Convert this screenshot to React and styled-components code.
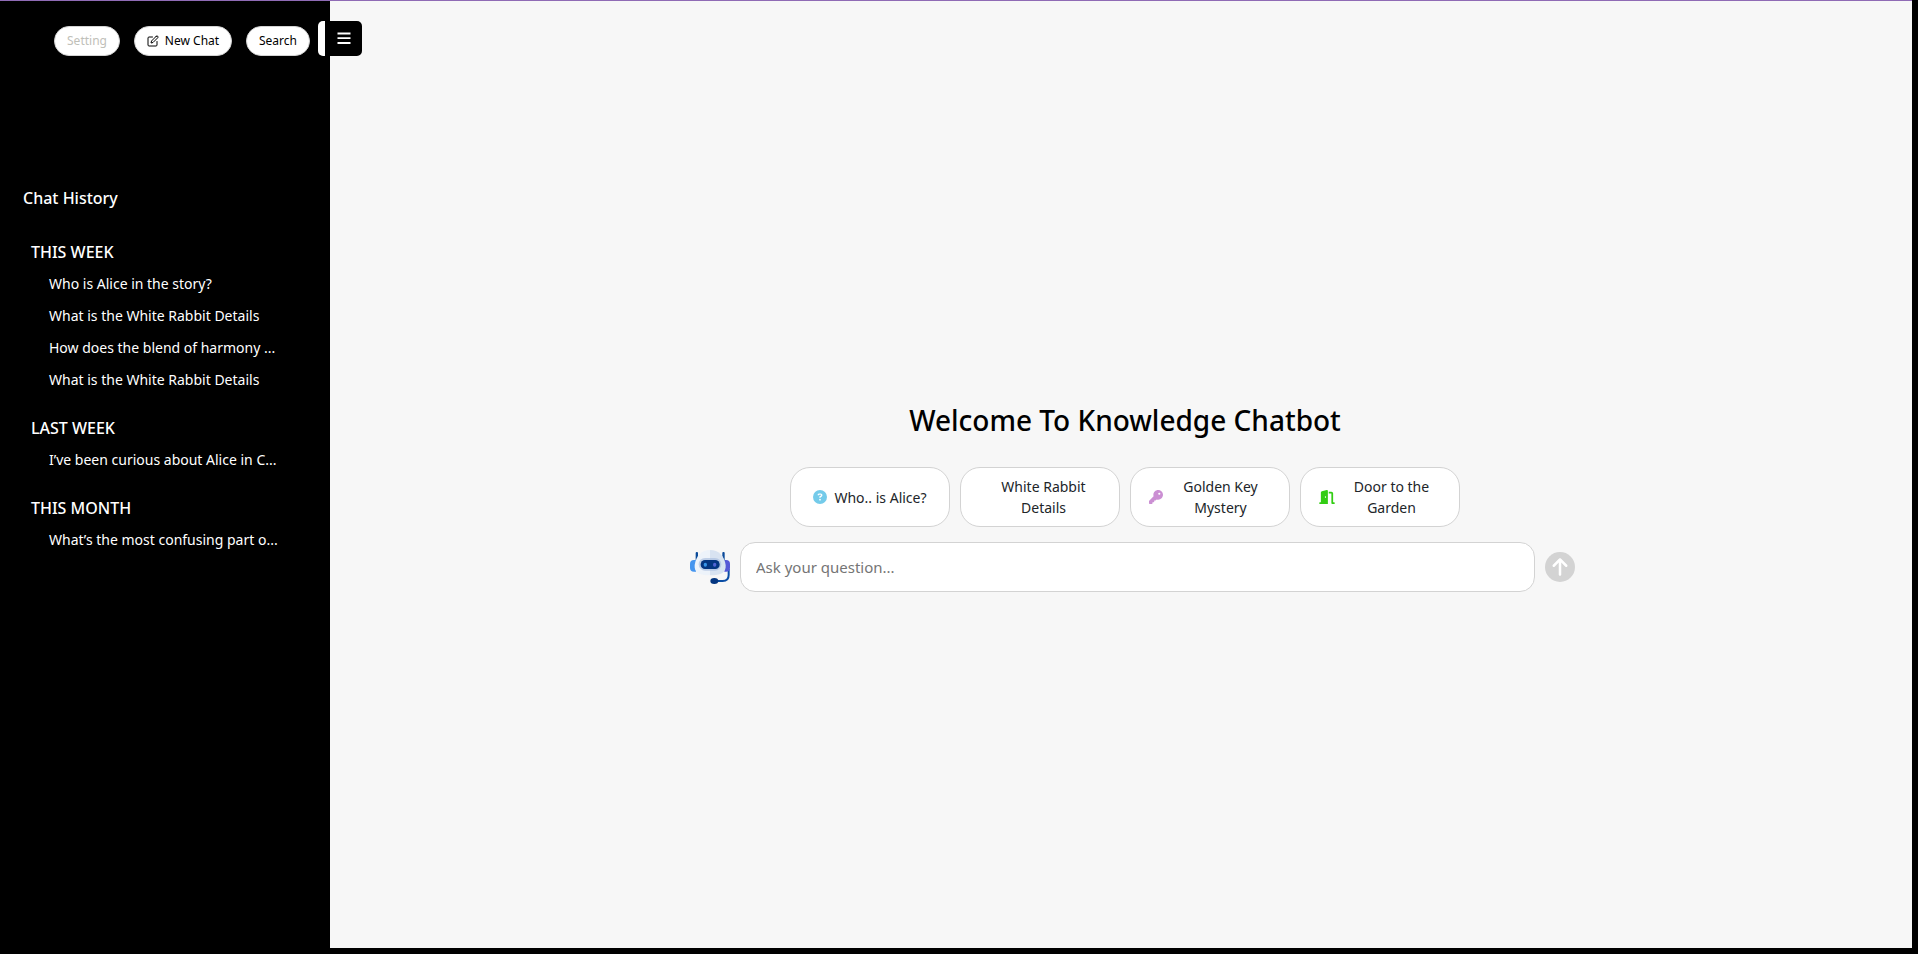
import React from "react";
import styled, { createGlobalStyle } from "styled-components";
import { FiEdit } from "react-icons/fi";
import { FaArrowUp, FaCircleQuestion, FaDoorOpen, FaKey } from "react-icons/fa6";

const GlobalStyle = createGlobalStyle`
  *, *::before, *::after { box-sizing: border-box; }
  body {
    margin: 0;
    background: #000;
    font-family: "Noto Sans", sans-serif;
  }
  button, input { font-family: inherit; }
`;

const Page = styled.div`
  min-height: 100vh;
  padding: 0 6px 6px 0;
  display: flex;
`;

const Shell = styled.div`
  position: relative;
  flex: 1;
  display: flex;
  border-top: 1px solid #8f6bb5;
`;

const Sidebar = styled.aside`
  width: 330px;
  flex-shrink: 0;
  background: #000;
  color: #fff;
`;

const Toolbar = styled.div`
  display: flex;
  gap: 14px;
  padding: 25px 20px 0 54px;
`;

const PillButton = styled.button`
  display: flex;
  align-items: center;
  justify-content: center;
  gap: 6px;
  width: ${(p) => p.$width}px;
  height: 30px;
  padding: 0;
  border: 1px solid #d3d3d3;
  border-radius: 15px;
  background: #fff;
  color: #000;
  font-size: 12px;
  line-height: 18px;

  &:disabled { color: #bfc0b9; }
`;

const ToggleButton = styled.button`
  position: absolute;
  top: 20px;
  left: 318px;
  width: 44px;
  height: 35px;
  display: flex;
  align-items: center;
  justify-content: center;
  padding: 0;
  border: 0 solid #fff;
  border-left-width: 7px;
  border-radius: 5px;
  background: #000;
  color: #fff;
`;

const History = styled.nav`
  padding: 130px 20px 0 23px;
`;

const HistoryTitle = styled.h2`
  margin: 0 0 30px;
  font-size: 16px;
  font-weight: 500;
  line-height: 24px;
`;

const HistoryGroup = styled.section`
  padding-left: 8px;
  margin-bottom: 20px;
`;

const GroupTitle = styled.h3`
  margin: 0 0 4px;
  font-size: 16px;
  font-weight: 500;
  line-height: 24px;
`;

const HistoryList = styled.ul`
  margin: 0;
  padding: 0 0 0 18px;
  list-style: none;
`;

const HistoryLink = styled.a`
  display: block;
  color: #fff;
  font-size: 14px;
  line-height: 32px;
  text-decoration: none;
  white-space: nowrap;
`;

const Main = styled.main`
  flex: 1;
  display: flex;
  flex-direction: column;
  align-items: center;
  justify-content: center;
  padding: 42px 0 0 8px;
  background: #f7f7f7;
`;

const Title = styled.h1`
  margin: 0 0 26px;
  color: #000;
  font-size: 28px;
  font-weight: 500;
  line-height: 42px;
`;

const Suggestions = styled.div`
  display: flex;
  gap: 10px;
  margin-bottom: 15px;
`;

const SuggestionCard = styled.button`
  display: flex;
  align-items: center;
  justify-content: center;
  gap: 7px;
  width: 160px;
  height: 60px;
  padding: 0 18px;
  border: 1px solid #d3d3d3;
  border-radius: 20px;
  background: #fff;
  color: #212529;
  font-size: 14px;
  line-height: 21px;
`;

const CardIcon = styled.span`
  display: flex;
  flex-shrink: 0;
  color: ${(p) => p.$color};

  svg {
    width: ${(p) => p.$width}px;
    height: 14px;
  }
`;

const AskForm = styled.form`
  display: flex;
  align-items: center;
  gap: 10px;
  width: 100%;
  max-width: 900px;
  padding-left: 15px;
`;

const AskInput = styled.input`
  flex: 1;
  min-width: 0;
  height: 50px;
  padding: 0 15px;
  border: 1px solid #d3d3d3;
  border-radius: 15px;
  background: #fff;
  color: #212529;
  font-size: 15px;

  &::placeholder { color: #757575; }
`;

const SendButton = styled.button`
  display: flex;
  align-items: center;
  justify-content: center;
  width: 30px;
  height: 30px;
  padding: 0;
  border: 0;
  border-radius: 50%;
  background: #d3d3d3;
  color: #fff;
  font-size: 20px;
`;

const history = [
  {
    title: "THIS WEEK",
    items: [
      "Who is Alice in the story?",
      "What is the White Rabbit Details",
      "How does the blend of harmony ...",
      "What is the White Rabbit Details",
    ],
  },
  { title: "LAST WEEK", items: ["I’ve been curious about Alice in C..."] },
  { title: "THIS MONTH", items: ["What’s the most confusing part o..."] },
];

const suggestions = [
  { label: "Who.. is Alice?", color: "#74cbea", icon: FaCircleQuestion, width: 14 },
  { label: "White Rabbit Details", color: "#fff" },
  { label: "Golden Key Mystery", color: "#cb8fd3", icon: FaKey, width: 14 },
  { label: "Door to the Garden", color: "#32cd13", icon: FaDoorOpen, width: 16 },
];

function MenuIcon() {
  return (
    <svg width="14" height="13" viewBox="0 0 14 13" stroke="currentColor" strokeWidth="1.8" aria-hidden="true">
      <path d="M0.5 1.5H13.5M0.5 6.2H13.5M0.5 11H13.5" />
    </svg>
  );
}

function BotAvatar() {
  return (
    <svg width="40" height="40" viewBox="0 0 120 120" aria-hidden="true">
      <rect x="17" y="15" width="7" height="32" rx="3" fill="#0a4a9a" />
      <rect x="97" y="15" width="7" height="32" rx="3" fill="#0a4a9a" />
      <path d="M116 66V84Q116 102 98 102H74" fill="none" stroke="#0a4da5" strokeWidth="6" />
      <path d="M18 39H12Q0 39 0 51V63Q0 74 12 74H18Z" fill="#4495ef" />
      <path d="M103 39H108Q120 39 120 51V63Q120 74 108 74H103Z" fill="#5558d6" />
      <path d="M60 9C35 9 18 27 14 54C12 76 26 85 60 85Z" fill="#edf3fa" />
      <path d="M60 9C86 9 103 27 107 54C109 76 94 85 60 85Z" fill="#d8e3f1" />
      <rect x="26" y="33" width="68" height="38" rx="19" fill="#a8bddf" opacity="0.65" />
      <rect x="32" y="39" width="57" height="27" rx="13" fill="#043681" />
      <ellipse cx="46" cy="53" rx="5" ry="6" fill="#3795e8" />
      <ellipse cx="74" cy="53" rx="5" ry="6" fill="#5064d4" />
      <ellipse cx="73" cy="102" rx="12" ry="9" fill="#043681" />
    </svg>
  );
}

export default function App() {
  return (
    <Page>
      <GlobalStyle />
      <Shell>
        <Sidebar>
          <Toolbar>
            <PillButton type="button" $width={66} disabled>Setting</PillButton>
            <PillButton type="button" $width={98}>
              <FiEdit size={12} />
              New Chat
            </PillButton>
            <PillButton type="button" $width={64}>Search</PillButton>
          </Toolbar>
          <History aria-label="Chat History">
            <HistoryTitle>Chat History</HistoryTitle>
            {history.map((group) => (
              <HistoryGroup key={group.title}>
                <GroupTitle>{group.title}</GroupTitle>
                <HistoryList>
                  {group.items.map((item, i) => (
                    <li key={i}>
                      <HistoryLink href="#">{item}</HistoryLink>
                    </li>
                  ))}
                </HistoryList>
              </HistoryGroup>
            ))}
          </History>
        </Sidebar>
        <Main>
          <Title>Welcome To Knowledge Chatbot</Title>
          <Suggestions>
            {suggestions.map(({ label, color, icon: Icon, width }) => (
              <SuggestionCard type="button" key={label}>
                <CardIcon $color={color} $width={width}>{Icon && <Icon />}</CardIcon>
                <span>{label}</span>
              </SuggestionCard>
            ))}
          </Suggestions>
          <AskForm onSubmit={(e) => e.preventDefault()}>
            <BotAvatar />
            <AskInput type="text" aria-label="Ask your question" placeholder="Ask your question..." />
            <SendButton type="submit" aria-label="Send">
              <FaArrowUp />
            </SendButton>
          </AskForm>
        </Main>
        <ToggleButton type="button" aria-label="Toggle sidebar">
          <MenuIcon />
        </ToggleButton>
      </Shell>
    </Page>
  );
}
